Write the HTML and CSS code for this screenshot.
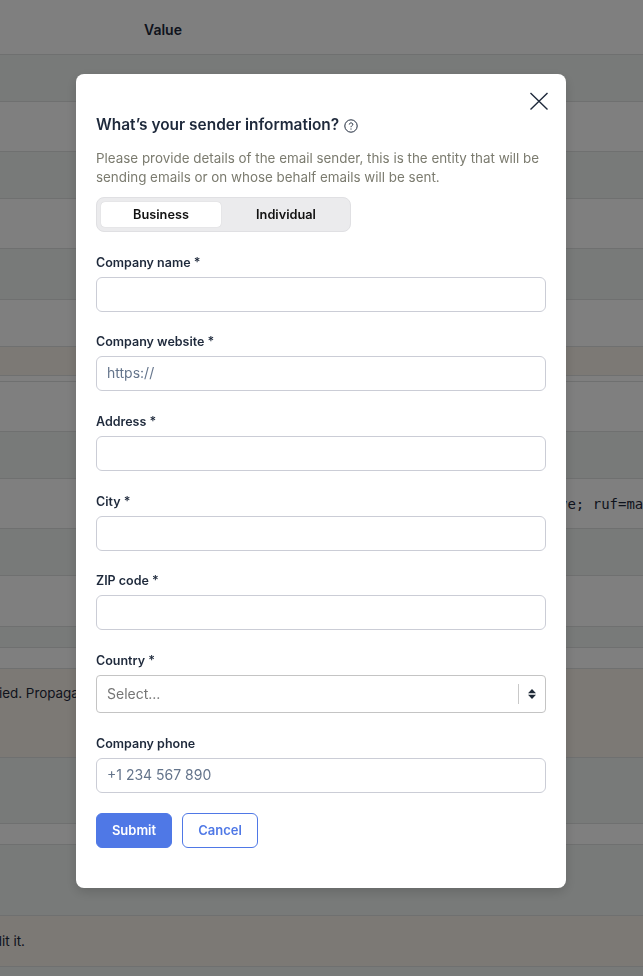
FILE: index.html
```html
<!DOCTYPE html>
<html lang="en">
<head>
  <meta charset="UTF-8"/>
  <meta name="viewport" content="width=device-width, initial-scale=1.0"/>
  <title>Sender information</title>
  <link rel="stylesheet" href="styles.css">
</head>
<body>
  <!-- records table behind the modal -->
  <div class="table">
    <div class="row h-head"><span class="head-cell">Value</span></div>
    <div class="row h-47 even"></div>
    <div class="row h-50"></div>
    <div class="row h-47 even"></div>
    <div class="row h-50"></div>
    <div class="row h-51 even"></div>
    <div class="row h-47"></div>
    <div class="row h-29 warn"></div>
    <div class="row h-6"></div>
    <div class="row h-50"></div>
    <div class="row h-47 even"></div>
    <div class="row h-50"><code class="mono-cell">v=DMARC1; p=none; pct=100; fo=1; rua=mailto:archive; ruf=mailto:postmaster</code></div>
    <div class="row h-47 even"></div>
    <div class="row h-51"></div>
    <div class="row h-21 even"></div>
    <div class="row h-21"></div>
    <div class="row h-89 warn top"><span class="note-cell prop-note">ied. Propagation</span></div>
    <div class="row h-66 even"></div>
    <div class="row h-21"></div>
    <div class="row h-71 even"></div>
    <div class="row h-51 warn"><span class="note-cell edit-note">edit it.</span></div>
    <div class="row h-10 even"></div>
  </div>

  <div class="overlay">
    <div class="modal">
      <button type="button" class="close" aria-label="Close">
        <svg width="20" height="20" viewBox="0 0 20 20" fill="none" stroke="#1e293b" stroke-width="1.4">
          <path d="M1.5 2 L18.5 18.5 M18.5 2 L1.5 18.5"/>
        </svg>
      </button>

      <h2 class="title">What’s your sender information?
        <svg class="help" width="14" height="14" viewBox="0 0 14 14" fill="none" stroke="#1e293b" stroke-width="1">
          <circle cx="7" cy="7" r="6.2"/>
          <path d="M5.3 5.5 C5.3 3.4 8.8 3.4 8.8 5.4 C8.8 6.6 7 6.7 7 8.2"/>
          <path d="M7 9.5 V10.6"/>
        </svg>
      </h2>
      <p class="intro">Please provide details of the email sender, this is the entity that will be sending emails or on whose behalf emails will be sent.</p>

      <div class="switch">
        <button type="button" class="switch-btn active">Business</button>
        <button type="button" class="switch-btn">Individual</button>
      </div>

      <div class="field">
        <label for="company">Company name *</label>
        <input type="text" id="company"/>
      </div>
      <div class="field">
        <label for="website">Company website *</label>
        <input type="text" id="website" placeholder="https://"/>
      </div>
      <div class="field">
        <label for="address">Address *</label>
        <input type="text" id="address"/>
      </div>
      <div class="field">
        <label for="city">City *</label>
        <input type="text" id="city"/>
      </div>
      <div class="field">
        <label for="zip">ZIP code *</label>
        <input type="text" id="zip"/>
      </div>
      <div class="field field-select">
        <label>Country *</label>
        <div class="select">
          <span class="select-value">Select...</span>
          <span class="select-sep"></span>
          <svg width="8" height="10" viewBox="0 0 8 10" fill="#1f2937">
            <path d="M4 0 L8 4.2 H0 Z"/>
            <path d="M4 10 L8 5.8 H0 Z"/>
          </svg>
        </div>
      </div>
      <div class="field field-last">
        <label for="phone">Company phone</label>
        <input type="text" id="phone" placeholder="+1 234 567 890"/>
      </div>

      <div class="actions">
        <button type="button" class="btn btn-primary">Submit</button>
        <button type="button" class="btn btn-outline">Cancel</button>
      </div>
    </div>
  </div>
</body>
</html>
```

FILE: styles.css
```css
* {
  box-sizing: border-box;
}

html, body {
  height: 100%;
}

body {
  margin: 0;
  font-family: Inter, 'Noto Sans', sans-serif;
  font-size: 14px;
  color: #1e293b;
  background: #fff;
  overflow: hidden;
}

/* Table behind the modal */
.row {
  display: flex;
  align-items: center;
  white-space: nowrap;
  overflow: hidden;
  border-bottom: 1px solid #dfe1e1;
}

.row.even {
  background: #f0f4f2;
}

.row.warn {
  background: #f8f2ea;
}

.row.top {
  align-items: flex-start;
  padding-top: 16px;
}

.h-head { height: 55px; }
.h-6 { height: 6px; }
.h-10 { height: 10px; }
.h-21 { height: 21px; }
.h-29 { height: 29px; }
.h-47 { height: 47px; }
.h-50 { height: 50px; }
.h-51 { height: 51px; }
.h-66 { height: 66px; }
.h-71 { height: 71px; }
.h-89 { height: 89px; }

.head-cell {
  margin-left: 144px;
  margin-top: 4px;
  font-weight: 600;
}

.mono-cell {
  margin-left: 146px;
  font-family: 'DejaVu Sans Mono', monospace;
  font-size: 14px;
}

.note-cell {
  font-size: 13.4px;
}

.prop-note {
  margin-left: -1px;
}

.edit-note {
  margin-left: -14px;
}

/* Modal */
.overlay {
  position: fixed;
  top: 0;
  left: 0;
  width: 100%;
  height: 100%;
  padding: 74px 0 0 76px;
  background: rgba(0, 0, 0, 0.5);
}

.modal {
  position: relative;
  width: 490px;
  height: 814px;
  padding: 41px 20px 0;
  background: #fff;
  border-radius: 8px;
  box-shadow: 0 4px 12px rgba(0, 0, 0, 0.15);
}

.close {
  position: absolute;
  top: 17px;
  right: 17px;
  padding: 0;
  display: flex;
  border: none;
  background: transparent;
  cursor: pointer;
}

.title {
  display: flex;
  align-items: center;
  gap: 5px;
  margin: 0 0 14px;
  font-size: 15.45px;
  line-height: 20px;
  font-weight: 600;
  color: #1e293b;
}

.help {
  margin-top: 1px;
}

.intro {
  margin: 0 0 10px;
  font-size: 13.4px;
  line-height: 19px;
  color: #7b7b6f;
}

.switch {
  display: flex;
  gap: 5px;
  width: 255px;
  height: 35px;
  padding: 4px;
  margin-bottom: 20.6px;
  background: #ebebed;
  border: 1px solid #e0e0e3;
  border-radius: 8px;
}

.switch-btn {
  flex: 1;
  padding: 0;
  font-family: inherit;
  font-size: 12.75px;
  font-weight: 600;
  color: #111;
  background: transparent;
  border: none;
  border-radius: 4px;
  cursor: pointer;
}

.switch-btn.active {
  background: #fff;
  box-shadow: 0 0 1px rgba(0, 0, 0, 0.2);
}

.field {
  margin-bottom: 20.7px;
}

.field label {
  display: block;
  margin-bottom: 5px;
  font-size: 12.5px;
  line-height: 19px;
  font-weight: 600;
  color: #1e293b;
}

.field input {
  display: block;
  width: 100%;
  height: 35px;
  padding: 0 10px 2px;
  font-family: inherit;
  font-size: 14px;
  color: #1e293b;
  background: #fff;
  border: 1px solid #cbcdd6;
  border-radius: 6px;
  outline: none;
}

.field input::placeholder {
  color: #64748b;
  opacity: 1;
}

.field-select {
  margin-bottom: 21px;
}

.field-last {
  margin-bottom: 20px;
}

.select {
  display: flex;
  align-items: center;
  height: 38px;
  padding: 0 9px 0 10px;
  border: 1px solid #c4c4c4;
  border-radius: 4px;
}

.select-value {
  flex: 1;
  margin-top: -2px;
  color: #757575;
}

.select-sep {
  width: 1px;
  height: 20px;
  margin-right: 9px;
  background: #c9c9c9;
}

.actions {
  display: flex;
  gap: 10px;
}

.btn {
  height: 35px;
  padding: 0 0 2px;
  font-family: inherit;
  font-size: 13px;
  font-weight: 600;
  border-radius: 6px;
  cursor: pointer;
}

.btn-primary {
  width: 76px;
  color: #fff;
  background: #4f78e6;
  border: 1px solid #4f78e6;
}

.btn-outline {
  width: 76px;
  color: #4f78e6;
  background: #fff;
  border: 1px solid #4f78e6;
}
```
